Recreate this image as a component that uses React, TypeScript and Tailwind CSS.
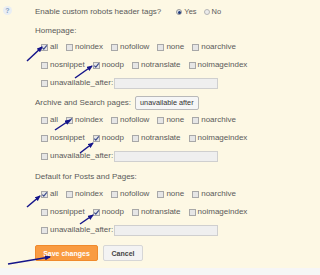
import React from "react";

const Check = () => (
  <svg width="7" height="7" viewBox="0 0 7 7" className="block shrink-0">
    <polyline points="1.3,3.6 2.8,5.2 5.8,1.3" fill="none" stroke="#3b4a8a" strokeWidth="1.1" />
  </svg>
);

const Cb = ({ label, checked = false, last = false }: { label: string; checked?: boolean; last?: boolean }) => (
  <span className={`flex items-center ${last ? "" : "mr-[8px]"}`}>
    <span className="w-[7px] h-[7px] border border-[#a8a8a8] bg-[#e6e6e6] mr-[2px] flex items-center justify-center overflow-visible">
      {checked && <Check />}
    </span>
    <span>{label}</span>
  </span>
);

const Rows = ({ c1, c2, first }: { c1: string[]; c2: string[]; first: string }) => (
  <>
    <div className={`h-[12px] ${first} flex items-center pl-[6px]`}>
      <Cb label="all" checked={c1.includes("all")} />
      <Cb label="noindex" checked={c1.includes("noindex")} />
      <Cb label="nofollow" />
      <Cb label="none" />
      <Cb label="noarchive" last />
    </div>
    <div className="h-[12px] mt-[6px] flex items-center pl-[6px]">
      <Cb label="nosnippet" />
      <Cb label="noodp" checked={c2.includes("noodp")} />
      <Cb label="notranslate" />
      <Cb label="noimageindex" last />
    </div>
    <div className="h-[12px] mt-[6px] flex items-center pl-[6px]">
      <Cb label="unavailable_after:" last />
      <span className="ml-[1px] w-[104px] h-[11px] border border-[#cfcfcf] bg-[#efefef]" />
    </div>
  </>
);

export default function App() {
  return (
    <div className="w-[320px] h-[275px] relative overflow-hidden font-['Liberation_Sans',Arial,sans-serif] text-[8px] leading-none text-[#5a5a5a]">
      <div className="h-[268px] bg-[#fdf8e4] flex">
        <div className="w-[35px] pt-[6px] pl-[3px]">
          <div className="w-[9px] h-[9px] rounded-full bg-[#e9eef4] text-[#86a3c4] text-[7px] font-bold flex items-center justify-center">?</div>
        </div>
        <div className="flex flex-col pt-[6px]">
          <div className="h-[12px] flex items-center">
            <span>Enable custom robots header tags?</span>
            <span className="ml-[15px] flex items-center text-[7.5px]">
              <span className="w-[6px] h-[6px] rounded-full border border-[#9a9a9a] bg-[#dfe3ea] flex items-center justify-center mr-[2px]">
                <span className="w-[3px] h-[3px] rounded-full bg-[#1f3a7a]" />
              </span>
              <span className="mr-[7px]">Yes</span>
              <span className="w-[6px] h-[6px] rounded-full border border-[#b5b5b5] bg-[#ececec] mr-[2px]" />
              <span>No</span>
            </span>
          </div>
          <div className="h-[12px] mt-[7px] flex items-center">Homepage:</div>
          <Rows c1={["all"]} c2={["noodp"]} first="mt-[4px]" />
          <div className="h-[12px] mt-[8px] flex items-center">
            <span>Archive and Search pages:</span>
            <span className="ml-[4px] h-[14px] px-[4px] flex items-center rounded-[2px] border border-[#b9b9b9] bg-[#f6f6f6] text-[7.3px] text-[#333]">
              unavailable after
            </span>
          </div>
          <Rows c1={["noindex"]} c2={["noodp"]} first="mt-[5px]" />
          <div className="h-[12px] mt-[9px] flex items-center">Default for Posts and Pages:</div>
          <Rows c1={["all"]} c2={["noodp"]} first="mt-[5px]" />
          <div className="h-[16px] mt-[9px] flex items-center">
            <span className="w-[63px] h-[16px] flex items-center justify-center rounded-[2px] bg-[#f99b41] border border-[#f08a2c] text-white font-bold text-[7px]">
              Save changes
            </span>
            <span className="ml-[5px] w-[40px] h-[16px] flex items-center justify-center rounded-[2px] bg-[#f3f3f3] border border-[#d6d6d6] text-[#444] font-bold text-[7px]">
              Cancel
            </span>
          </div>
        </div>
      </div>
      <div className="h-[7px] bg-[#f6f6f6]" />
      <svg className="absolute inset-0 pointer-events-none" width="320" height="275" viewBox="0 0 320 275">
        <defs>
          <marker id="ah" markerUnits="userSpaceOnUse" markerWidth="6" markerHeight="5" refX="5" refY="2.5" orient="auto">
            <path d="M0,0 L6,2.5 L0,5 z" fill="#14148a" />
          </marker>
        </defs>
        <g stroke="#14148a" strokeWidth="1.5" fill="none" markerEnd="url(#ah)">
          <line x1="27" y1="61" x2="42" y2="47" />
          <line x1="75" y1="78" x2="92" y2="66" />
          <line x1="55" y1="130" x2="70" y2="120" />
          <line x1="80" y1="153" x2="93" y2="143" />
          <line x1="27" y1="207" x2="40" y2="196" />
          <line x1="80" y1="224" x2="93" y2="215" />
          <line x1="8" y1="264" x2="50" y2="257" />
        </g>
      </svg>
    </div>
  );
}
